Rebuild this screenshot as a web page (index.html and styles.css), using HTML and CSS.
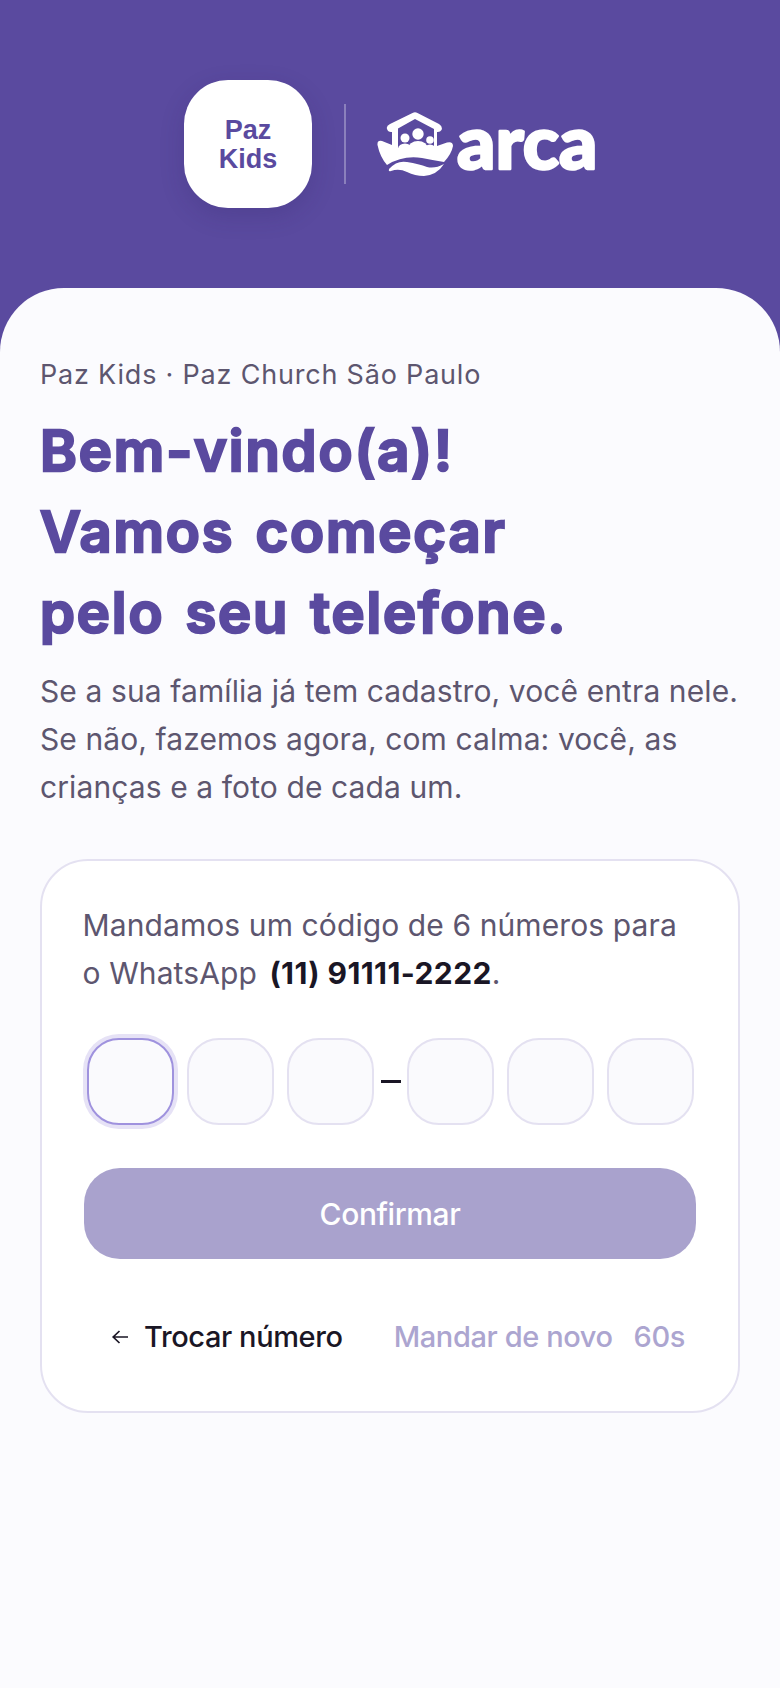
FILE: index.html
```html
<!DOCTYPE html>
<html lang="pt-BR">
<head>
<meta charset="utf-8">
<title>Paz Kids</title>
<link rel="stylesheet" href="styles.css">
</head>
<body>
<header class="hero">
  <div class="brand-box"><span>Paz<br>Kids</span></div>
  <div class="divider"></div>
  <div class="arca">
    <svg class="ark" viewBox="0 0 76 64" width="76" height="64" aria-hidden="true">
      <path class="ark-fill" fill-rule="evenodd" d="M35.500 1Q38-.5 40.500 1L62 12Q66 14.500 64.500 18 63 20.500 60 20V34L70 30.500Q76 29 76 34 74.500 42 67 50 55 48 45 46 26 43 10 53 3 45 .5 33 0 28 5 29L15 33V20Q11 20.500 10 17 9 14 13 12ZM38 7 21 16.500V36H57V17Z"/>
      <circle class="ark-fill" cx="41" cy="22" r="5.700"/>
      <circle class="ark-fill" cx="28" cy="26" r="4.500"/>
      <circle class="ark-fill" cx="53" cy="28" r="3.800"/>
      <ellipse class="ark-fill" cx="41" cy="37" rx="10" ry="8"/>
      <ellipse class="ark-fill" cx="28" cy="37" rx="7" ry="5.500"/>
      <ellipse class="ark-fill" cx="53" cy="38" rx="6" ry="5.500"/>
      <path class="ark-fill" d="M12 57Q20 48 30 50 42 52 50 55 58 57 67 52 60 63 47 64 38 64 30 60 22 56 14 59 11 60 12 57Z"/>
    </svg>
    <svg class="arca-word" viewBox="0 0 142 100" width="142" height="100" role="img">
      <text class="arca-text" x="1" y="78.500">arca</text>
    </svg>
  </div>
</header>

<main class="sheet">
  <p class="eyebrow">Paz Kids · Paz Church São Paulo</p>
  <h1 class="title">Bem-vindo(a)!<br>Vamos começar<br>pelo seu telefone.</h1>
  <p class="lead">Se a sua família já tem cadastro, você entra nele.<br>Se não, fazemos agora, com calma: você, as<br>crianças e a foto de cada um.</p>

  <section class="card">
    <p class="card-text">Mandamos um código de 6 números para<br>o WhatsApp <strong>(11) 91111-2222</strong>.</p>
    <div class="code">
      <div class="cell cell-active"></div>
      <div class="cell"></div>
      <div class="cell"></div>
      <div class="dash"></div>
      <div class="cell"></div>
      <div class="cell"></div>
      <div class="cell"></div>
    </div>
    <button class="confirm" type="button">Confirmar</button>
    <div class="actions">
      <a class="back">
        <svg viewBox="0 0 18 18" width="18" height="18" aria-hidden="true"><path d="M17 9H2M8.500 3 2.200 9l6.300 6" fill="none" stroke="currentColor" stroke-width="1.700"/></svg>
        Trocar número
      </a>
      <span class="resend"><span>Mandar de novo</span><span>60s</span></span>
    </div>
  </section>
</main>
</body>
</html>
```
FILE: styles.css
```css
* { box-sizing: border-box; }
html, body { margin: 0; padding: 0; }
body {
  width: 780px;
  min-height: 1688px;
  background: #5a4a9f;
  font-family: "Inter", "Liberation Sans", sans-serif;
  display: flex;
  flex-direction: column;
}
.hero {
  height: 288px;
  flex: none;
  padding-top: 80px;
  display: flex;
  justify-content: center;
  align-items: flex-start;
  gap: 32px;
}
.brand-box {
  width: 128px;
  height: 128px;
  border-radius: 44px;
  background: #fff;
  box-shadow: 0 8px 24px rgba(40, 30, 90, .18);
  padding-top: 2px;
  display: flex;
  align-items: center;
  justify-content: center;
  text-align: center;
  font-family: "Liberation Sans", Arial, sans-serif;
  font-weight: 700;
  font-size: 27px;
  line-height: 29px;
  color: #5a4a9f;
}
.divider {
  width: 2px;
  height: 80px;
  margin-top: 24px;
  background: rgba(255, 255, 255, .3);
}
.arca {
  margin-top: 32px;
  display: flex;
  align-items: flex-start;
  gap: 3px;
}
.ark { display: block; flex: none; margin-left: -1px; }
.ark-fill { fill: #fff; }
.arca-word { display: block; flex: none; margin: -22px -2px 0 0; }
.arca-text {
  font-family: "Lato", sans-serif;
  font-weight: 900;
  font-size: 75px;
  fill: #fff;
  stroke: #fff;
  stroke-width: 2.500px;
  stroke-linejoin: round;
}
.sheet {
  flex: 1;
  background: #fbfbfe;
  border-radius: 64px 64px 0 0;
  padding: 0 40px;
}
.eyebrow {
  margin: 70px 0 0;
  font-size: 27px;
  line-height: 34px;
  font-weight: 400;
  letter-spacing: .8px;
  color: #5d566f;
}
.title {
  margin: 19px 0 0;
  font-family: "Inter", sans-serif;
  font-weight: 600;
  font-size: 56px;
  line-height: 81px;
  letter-spacing: 1.900px;
  word-spacing: 5px;
  -webkit-text-stroke: 2.500px #5a4a9f;
  color: #5a4a9f;
}
.lead {
  margin: 13px 0 0;
  font-size: 30px;
  line-height: 48px;
  letter-spacing: .1px;
  color: #5d566f;
}
.card {
  margin-top: 48px;
  width: 700px;
  height: 554px;
  background: #fff;
  border: 2px solid #e4e1f1;
  border-radius: 48px;
  padding: 40px 42px;
}
.card-text {
  margin: 0 0 0 -1.500px;
  font-size: 30px;
  line-height: 48px;
  letter-spacing: .1px;
  color: #5d566f;
}
.card-text strong { margin-left: 4px; color: #1a1625; font-weight: 700; letter-spacing: .4px; }
.code {
  margin-top: 41px;
  padding-left: 3px;
  display: flex;
  align-items: center;
  gap: 13px;
}
.cell {
  width: 87px;
  height: 87px;
  border-radius: 32px;
  background: #fafafd;
  border: 2px solid #e4e1f1;
}
.cell-active {
  border-color: #9f92de;
  box-shadow: 0 0 0 4px #e6e2f6;
}
.dash {
  width: 20px;
  height: 3px;
  margin: 0 -6.500px;
  background: #1a1625;
}
.confirm {
  display: block;
  width: 612px;
  height: 91px;
  margin-top: 43px;
  border: 0;
  border-radius: 36px;
  background: #a9a2cd;
  color: #fff;
  font-family: inherit;
  font-size: 30px;
  font-weight: 500;
  letter-spacing: -.4px;
}
.actions {
  margin-top: 54px;
  display: flex;
  justify-content: space-between;
  align-items: center;
  padding: 0 11px 0 27px;
  font-size: 29px;
  line-height: 48px;
  font-weight: 500;
  letter-spacing: -.4px;
}
.back {
  display: flex;
  align-items: center;
  gap: 15px;
  color: #1a1625;
}
.resend {
  display: flex;
  gap: 21px;
  color: #aca5d0;
}
```
